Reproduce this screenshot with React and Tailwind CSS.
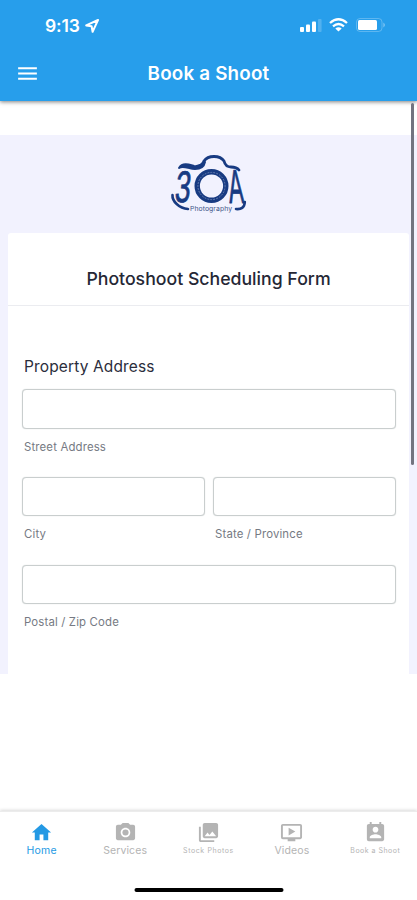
import {
    MdMenu,
    MdHome,
    MdPhotoCamera,
    MdPhotoLibrary,
    MdOndemandVideo,
    MdPermContactCalendar,
} from 'react-icons/md';

const tabs = [
    { label: 'Home', icon: MdHome, color: 'text-[#2499e4]', text: 'text-[10.5px] tracking-[0.3px]' },
    { label: 'Services', icon: MdPhotoCamera, color: 'text-[#b4b4b4]', text: 'text-[10.5px] tracking-[0.1px]' },
    { label: 'Stock Photos', icon: MdPhotoLibrary, color: 'text-[#b4b4b4]', text: 'text-[7px] tracking-[0.6px]' },
    { label: 'Videos', icon: MdOndemandVideo, color: 'text-[#b4b4b4]', text: 'text-[10.5px] tracking-[0.1px]' },
    { label: 'Book a Shoot', icon: MdPermContactCalendar, color: 'text-[#b4b4b4]', text: 'text-[7px] tracking-[0.5px]' },
];

const StatusBar = () => {
    return (
        <div className="flex h-[50px] items-center justify-between pl-[45px] pr-[31px]">
            <div className="flex items-center gap-[5px] pt-px">
                <span className="text-[17.5px] leading-5 font-semibold tracking-[-0.1px]">9:13</span>
                <svg width="14" height="14" viewBox="0 0 14 14" fill="none" stroke="currentColor" strokeWidth="2" strokeLinejoin="round">
                    <path d="M13 1 L1.2 6.4 L6.6 7.2 L7.6 12.8 Z" />
                </svg>
            </div>
            <div className="flex items-center">
                <svg width="22" height="14" viewBox="0 0 22 14" fill="currentColor">
                    <rect x="0" y="9" width="4" height="5" rx="1" />
                    <rect x="6" y="6.5" width="4" height="7.5" rx="1" />
                    <rect x="12" y="3.5" width="4" height="10.5" rx="1" />
                    <rect x="18" y="1" width="3.6" height="13" rx="1" opacity="0.2" />
                </svg>
                <svg className="ml-[7px]" width="19" height="14" viewBox="0 0 19 14" fill="none" stroke="currentColor" strokeWidth="2.3">
                    <path d="M1 5 Q9.5 -2.4 18 5" />
                    <path d="M4 8.3 Q9.5 3.6 15 8.3" />
                    <path d="M9.5 13.6 L6.3 10.5 Q9.5 8 12.7 10.5 Z" fill="currentColor" stroke="none" />
                </svg>
                <svg className="ml-[8px]" width="30" height="14" viewBox="0 0 30 14">
                    <rect x="0.5" y="0.5" width="25.5" height="13" rx="3.5" fill="none" stroke="white" strokeOpacity="0.25" />
                    <rect x="2" y="2" width="19" height="10" rx="1.5" fill="white" />
                    <path d="M27.5 4.5 Q30 7 27.5 9.5 Z" fill="white" opacity="0.5" />
                </svg>
            </div>
        </div>
    );
};

const Logo = () => {
    return (
        <svg className="overflow-visible" width="80" height="60" viewBox="0 0 80 60" fill="none" stroke="#183b82" strokeLinecap="round" strokeLinejoin="round">
            {/* camera body outline */}
            <path strokeWidth="2.8" d="M30 13 C34 12 34 10 35 8 C39 2 51 2 55 8 C56 12 58 14 62 14 C65 14 68 14.5 70 17" />
            <path strokeWidth="2" fill="#183b82" d="M10 15 C14 9 21 12 25 13 C30 14 33 11 36 9 C35 14 31 16 26 16 C20 16 14 12 10 15 Z" />
            {/* lens */}
            <circle cx="42.5" cy="33" r="14.3" strokeWidth="5.4" />
            <circle cx="42.5" cy="33" r="13.6" strokeWidth="0.8" stroke="#7c91bd" strokeDasharray="1 2" />
            <g fill="#183b82" strokeWidth="0.5" fontFamily="Liberation Sans">
                <text transform="translate(5 49) skewX(-6) scale(1 1.58)" fontSize="28">3</text>
                <text transform="translate(60.5 50) skewX(4) scale(0.8 1.7)" fontSize="28">A</text>
            </g>
            {/* swashes under both letters */}
            <path strokeWidth="2.6" d="M3.5 42 C3 48 10 55.5 19 56" />
            <path strokeWidth="2.6" d="M75.8 49 C75.5 55 72 56.5 67 56" />
            <text x="21" y="57.5" fill="#3d5488" stroke="none" fontSize="6.8" fontFamily="Inter" textLength="42">Photography</text>
        </svg>
    );
};

const Field = ({ label, height = 'h-[39px]' }) => {
    return (
        <label className="block flex-1">
            <input className={`block w-full rounded-[4px] border border-[#c9cece] bg-white shadow-[0_0_1px_#c9cece] ${height}`} />
            <span className="mt-[9px] block pl-[2px] text-[11.4px] leading-[18px] tracking-[0.15px] text-[#767a83]">{label}</span>
        </label>
    );
};

const App = () => {
    return (
        <div className="relative flex h-[900px] w-full flex-col overflow-hidden bg-white font-['Inter',sans-serif]">
            <header className="relative z-10 h-[101px] shrink-0 bg-[#279eeb] text-white shadow-[0_1px_4px_rgba(0,0,0,0.5)]">
                <StatusBar />
                <div className="grid h-[46px] grid-cols-[1fr_auto_1fr] items-center">
                    <MdMenu className="ml-[15px] text-[25px]" />
                    <h1 className="pt-[2px] text-[18.8px] font-semibold tracking-[0.2px]">Book a Shoot</h1>
                </div>
            </header>

            <main className="h-[710px] shrink-0 pt-[34px]">
                <div className="flex h-[539px] flex-col bg-[#f2f2fe] pr-[8px] pl-[8px]">
                    <div className="flex h-[98px] shrink-0 justify-center pt-[18px]">
                        <Logo />
                    </div>
                    <section className="flex-1 rounded-t-[3px] bg-white">
                        <h2 className="flex h-[73px] items-end justify-center border-b border-[#ebecf0] pb-[13px] text-[17.7px] leading-[26px] font-medium text-[#252735]">
                            Photoshoot Scheduling Form
                        </h2>
                        <form className="pr-[13px] pl-[14px] pt-[49px]">
                            <h3 className="mb-[10px] pl-[2px] text-[15.5px] leading-6 tracking-[0.13px] text-[#2b2d3b]">Property Address</h3>
                            <Field label="Street Address" height="h-[40px]" />
                            <div className="mt-[21px] flex gap-[8px]">
                                <Field label="City" />
                                <Field label="State / Province" />
                            </div>
                            <div className="mt-[22px]">
                                <Field label="Postal / Zip Code" />
                            </div>
                        </form>
                    </section>
                </div>
            </main>

            {/* page scrollbar */}
            <div className="absolute top-[103px] right-[3px] z-10 h-[362px] w-[3px] rounded-full bg-[#737480]" />

            <nav className="grid h-[89px] grid-cols-5 border-t border-[#ececec] bg-white pt-[9px] shadow-[0_-1px_3px_rgba(0,0,0,0.15)]">
                {tabs.map(({ label, icon: Icon, color, text }) => (
                    <a key={label} className={`flex flex-col items-center ${color}`}>
                        <Icon className="text-[23px]" />
                        <span className={`flex h-[14px] items-center whitespace-nowrap ${text}`}>{label}</span>
                    </a>
                ))}
            </nav>
            <div className="absolute bottom-[8px] left-1/2 h-[4px] w-[149px] -translate-x-1/2 rounded-full bg-black" />
        </div>
    );
};

export default App;
